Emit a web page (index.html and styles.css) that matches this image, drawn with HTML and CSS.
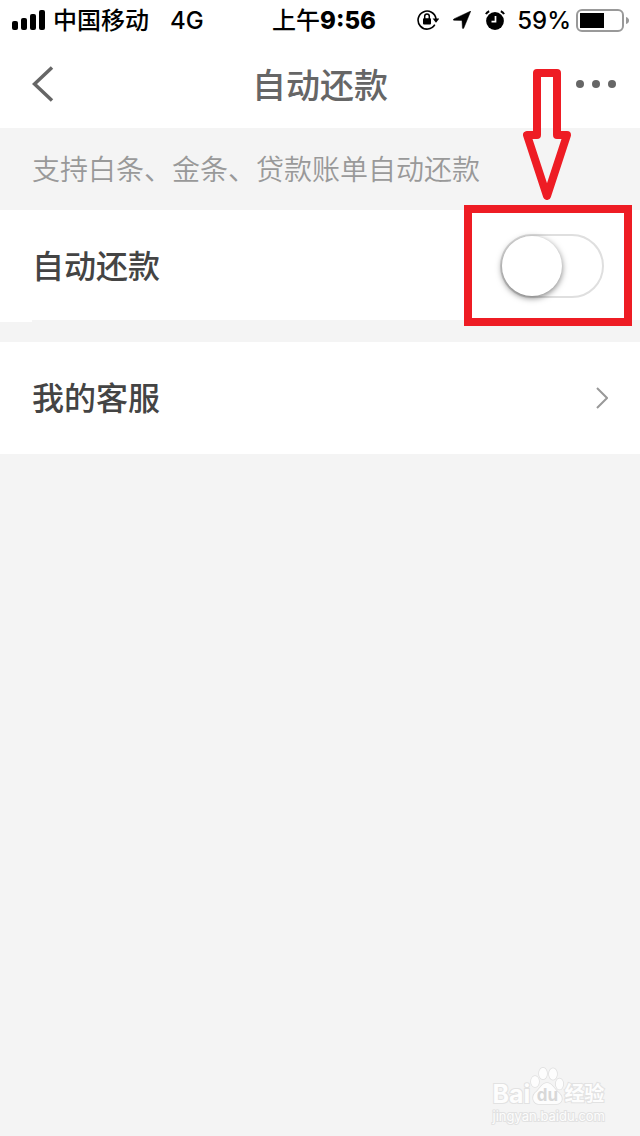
FILE: index.html
```html
<!DOCTYPE html>
<html lang="zh-CN">
<head>
<meta charset="utf-8">
<meta name="viewport" content="width=device-width, initial-scale=1">
<title>自动还款</title>
<link rel="stylesheet" href="styles.css">
</head>
<body>
<div class="status">
  <div class="status-left">
    <svg class="signal" width="34" height="20" viewBox="0 0 34 20" aria-hidden="true">
      <rect x="0" y="11" width="6" height="9" rx="2"/><rect x="9" y="8" width="6" height="12" rx="2"/><rect x="18" y="4" width="6" height="16" rx="2"/><rect x="27" y="0" width="6" height="20" rx="2"/>
    </svg>
    <span class="status-text carrier">中国移动</span>
    <span class="status-text">4G</span>
  </div>
  <div class="status-text status-time">上午<b>9:56</b></div>
  <div class="status-right">
    <svg width="22" height="22" viewBox="0 0 22 22" aria-hidden="true">
      <path d="M17.800 15.700A9 9 0 1 1 19 10" fill="none" stroke="#000" stroke-width="1.600"/>
      <path d="M15.600 9.500H22.400L19 13.800z"/>
      <rect x="6" y="9.300" width="8" height="6.200" rx="1"/>
      <path d="M7.700 10V7.300a2.300 2.300 0 0 1 4.600 0V10" fill="none" stroke="#000" stroke-width="1.500"/>
    </svg>
    <svg class="location" width="18" height="18" viewBox="0 0 18 18" aria-hidden="true"><path d="M17.800 0 10.800 17Q9.800 18.600 9.400 16.800L9 9.400 1 9.300Q-.8 8.900.9 7.900Z" stroke="#000" stroke-width=".5"/></svg>
    <svg class="alarm" width="20" height="20" viewBox="0 0 20 20" aria-hidden="true">
      <circle cx="10" cy="11" r="8.900"/><path d="M1 4.200Q1.800 2 4.200 1.200M19 4.200Q18.200 2 15.800 1.200" fill="none" stroke="#000" stroke-width="2"/>
      <path d="M10.500 6v5.700H6.500" fill="none" stroke="#fff" stroke-width="1.700"/>
    </svg>
    <span class="status-text">59%</span>
    <svg class="battery" width="54" height="24" viewBox="0 0 54 24" aria-hidden="true">
      <rect x="1" y="2" width="46" height="21" rx="5" fill="none" stroke="#999" stroke-width="2"/>
      <rect x="4" y="5" width="24" height="15"/><path d="M50 9q3 1 3 3.500T50 16z" fill="#999"/>
    </svg>
  </div>
</div>
<header class="nav">
  <button class="nav-button back" type="button" aria-label="返回">
    <svg width="22" height="36" viewBox="0 0 22 36"><path d="M20 1.500 2.500 18 20 34.500" fill="none" stroke="#666" stroke-width="3.500"/></svg>
  </button>
  <h1 class="title">自动还款</h1>
  <button class="nav-button more" type="button" aria-label="更多">
    <svg width="40" height="8" viewBox="0 0 40 8" fill="#666"><circle cx="4" cy="4" r="4"/><circle cx="20" cy="4" r="4"/><circle cx="36" cy="4" r="4"/></svg>
  </button>
</header>
<main class="content">
  <p class="notice">支持白条、金条、贷款账单自动还款</p>
  <div class="row setting">
    <label class="row-label" for="auto-repay">自动还款</label>
    <input class="switch" id="auto-repay" type="checkbox" role="switch">
    <span class="highlight"></span>
    <svg class="arrow" width="48" height="132" viewBox="0 0 48 132" aria-hidden="true"><path d="M14 4H34V66H44L24 127 4 66H14Z" fill="none" stroke="#ee1c24" stroke-width="8" stroke-linejoin="round"/></svg>
  </div>
  <a class="row service" href="#service">
    <span class="row-label">我的客服</span>
    <svg width="14" height="22" viewBox="0 0 14 22" aria-hidden="true"><path d="M3 1 13 11 3 21" fill="none" stroke="#999" stroke-width="2"/></svg>
  </a>
  <div class="watermark">
    <div class="brand">
      <span class="brand-latin">Bai</span>
      <span class="paw">
        <svg width="34" height="38" viewBox="0 0 34 38" aria-hidden="true" fill="#fdfdfd" stroke="#dfdfdf" stroke-width="1.500">
          <ellipse cx="5" cy="14.500" rx="4" ry="5.500"/><ellipse cx="13" cy="6.500" rx="4" ry="5.700"/><ellipse cx="23" cy="7" rx="4" ry="5.700"/><ellipse cx="29.500" cy="17" rx="3.700" ry="5.500"/>
          <path d="M17 16C12 16 10 22 5 26C1 31 4 37 9 37H26C32 37 34 31 29 26C24 22 22 16 17 16Z"/>
        </svg>
        <span class="paw-text">du</span>
      </span>
      <span class="brand-cjk">经验</span>
    </div>
    <div class="site">jingyan.baidu.com</div>
  </div>
</main>
</body>
</html>
```

FILE: styles.css
```css
* { box-sizing: border-box; }

body {
  margin: 0;
  min-height: 100vh;
  display: flex;
  flex-direction: column;
  background: #f4f4f4;
  color: #444;
  font-family: Inter, "Noto Sans CJK SC", sans-serif;
}

svg { display: block; flex: none; }

.status {
  display: grid;
  grid-template-columns: 1fr auto 1fr;
  align-items: center;
  height: 40px;
  padding: 0 10px 0 12px;
  background: #fff;
  color: #000;
  font-size: 24px;
  font-weight: 500;
  line-height: 36px;
  white-space: nowrap;
}

.status-left, .status-right { display: flex; align-items: center; }
.status-text { padding-top: 2px; }
.status-left { gap: 7px; }
.carrier { margin-right: 14px; }
.status-time { padding-left: 6px; }
.status-time b { font-weight: 800; }
.status-right { justify-content: flex-end; }
.location { margin-left: 14px; }
.alarm { margin: 0 12px 0 14px; }
.battery { margin-left: 5px; }

.nav {
  display: grid;
  grid-template-columns: 1fr auto 1fr;
  align-items: center;
  height: 88px;
  padding: 0 24px;
  background: #fff;
}

.nav-button {
  display: flex;
  padding: 0;
  border: 0;
  background: none;
}

.back { padding-left: 8px; }
.more { justify-self: end; }

.title {
  margin: 0;
  padding-top: 4px;
  color: #666;
  font-size: 34px;
  font-weight: 500;
  line-height: 48px;
}

.content { position: relative; flex: 1; }

.notice {
  margin: 0;
  padding: 22px 32px 20px;
  color: #999;
  font-size: 28px;
  font-weight: 350;
  line-height: 40px;
}

.row {
  display: flex;
  align-items: center;
  justify-content: space-between;
  height: 112px;
  padding: 0 32px;
  background: #fff;
  color: #444;
  font-size: 32px;
  font-weight: 500;
  line-height: 48px;
  text-decoration: none;
}

.row-label { padding-top: 2px; }

.setting {
  position: relative;
  margin-bottom: 20px;
  padding-right: 36px;
}

.setting::after {
  content: "";
  position: absolute;
  left: 32px;
  right: 0;
  bottom: 0;
  height: 2px;
  background: #f4f4f4;
}

.switch {
  appearance: none;
  display: flex;
  width: 104px;
  height: 64px;
  margin: 0;
  border: 2px solid #dfdfdf;
  border-radius: 32px;
  background: #fff;
}

.switch::before {
  content: "";
  width: 60px;
  height: 60px;
  border-radius: 50%;
  background: #fff;
  box-shadow: 0 2px 6px rgba(0, 0, 0, 0.5);
}

.switch:checked { justify-content: flex-end; background: #4cd964; }

.highlight {
  position: absolute;
  z-index: 1;
  top: -5px;
  right: 8px;
  width: 168px;
  height: 121px;
  border: 8px solid #ee1c24;
  pointer-events: none;
}

.arrow {
  position: absolute;
  top: -141px;
  right: 69px;
  pointer-events: none;
}

.watermark {
  position: absolute;
  right: 35px;
  bottom: 12px;
  color: #fdfdfd;
  -webkit-text-stroke: 2px #e2e2e2;
  paint-order: stroke fill;
}

.brand { display: flex; align-items: flex-end; height: 38px; margin-bottom: 3px; }
.brand-latin { font-size: 25px; font-weight: 700; line-height: 22px; }
.brand-cjk { font-size: 20px; font-weight: 700; line-height: 22px; }
.paw { position: relative; }

.paw-text {
  position: absolute;
  inset: auto 0 0;
  color: #d8d8d8;
  font-size: 17px;
  font-weight: 700;
  line-height: 20px;
  text-align: center;
  -webkit-text-stroke: 0;
}

.site { font-size: 13px; line-height: 16px; }
```
